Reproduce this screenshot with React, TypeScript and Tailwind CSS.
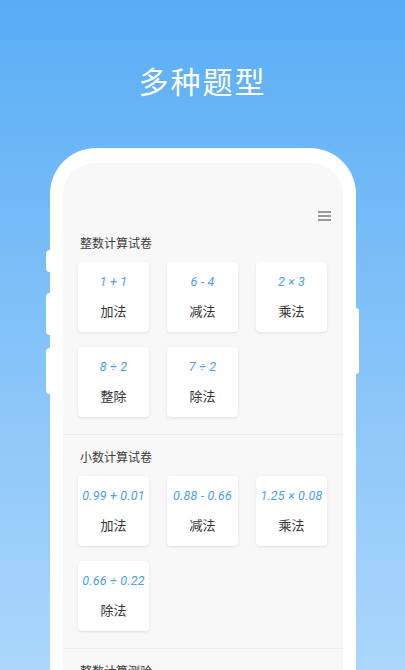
const sections = [
  {
    title: '整数计算试卷',
    items: [
      { expr: '1 + 1', label: '加法' },
      { expr: '6 - 4', label: '减法' },
      { expr: '2 × 3', label: '乘法' },
      { expr: '8 ÷ 2', label: '整除' },
      { expr: '7 ÷ 2', label: '除法' },
    ],
  },
  {
    title: '小数计算试卷',
    items: [
      { expr: '0.99 + 0.01', label: '加法' },
      { expr: '0.88 - 0.66', label: '减法' },
      { expr: '1.25 × 0.08', label: '乘法' },
      { expr: '0.66 ÷ 0.22', label: '除法' },
    ],
  },
  { title: '整数计算测验', items: [] },
]

const cjk = { fontFamily: '"Noto Sans CJK SC", "Noto Sans", sans-serif' }

export default function App() {
  return (
    <div className="h-[670px] w-[405px] overflow-hidden bg-gradient-to-b from-[#58adf5] to-[#abd7fb]" style={cjk}>
      <h1 className="pt-[58px] text-center text-[30px] leading-[44px] font-normal tracking-[2px] text-white">多种题型</h1>

      <div className="relative mt-[46px] ml-[50px] h-[600px] w-[306px] rounded-t-[46px] bg-white px-[13px] pt-[15px]">
        {/* side buttons */}
        <div className="absolute top-[102px] -left-[4px] h-[22px] w-[4px] rounded-l-sm bg-white" />
        <div className="absolute top-[145px] -left-[4px] h-[42px] w-[4px] rounded-l-sm bg-white" />
        <div className="absolute top-[200px] -left-[4px] h-[46px] w-[4px] rounded-l-sm bg-white" />
        <div className="absolute top-[160px] -right-[3px] h-[66px] w-[3px] rounded-r-sm bg-white" />

        <div className="h-full rounded-t-[32px] bg-[#f8f8f8] pt-[48px]">
          <div className="flex justify-end pr-[12px]">
            <div className="flex w-[13px] flex-col gap-[2.5px]">
              <span className="h-[1.5px] bg-[#9a9a9a]" />
              <span className="h-[1.5px] bg-[#9a9a9a]" />
              <span className="h-[1.5px] bg-[#9a9a9a]" />
            </div>
          </div>

          {sections.map((s, i) => (
            <section key={s.title} className={i > 0 ? 'border-t border-[#ededed] pt-[14px] pb-[17px]' : 'pt-[14px] pb-[17px]'}>
              <div className="pl-[17px] text-[12px] leading-[16px] text-[#3a3a3a]">{s.title}</div>
              {s.items.length > 0 && (
                <div className="mt-[11px] grid grid-cols-[71px_71px_71px] gap-x-[18px] gap-y-[15px] pl-[15px]">
                  {s.items.map((it, j) => (
                    <div key={j} className="flex h-[70px] flex-col items-center rounded-[4px] bg-white shadow-[0_1px_3px_rgba(0,0,0,0.1)]">
                      <div
                        className="mt-[12px] text-[12.5px] leading-[16px] italic tracking-[0.2px] text-[#4aa0ea] whitespace-nowrap"
                        style={{ fontFamily: 'Roboto, "Liberation Sans", sans-serif' }}
                      >
                        {it.expr}
                      </div>
                      <div className="mt-[13px] text-[13px] leading-[16px] text-[#333]">{it.label}</div>
                    </div>
                  ))}
                </div>
              )}
            </section>
          ))}
        </div>
      </div>
    </div>
  )
}
